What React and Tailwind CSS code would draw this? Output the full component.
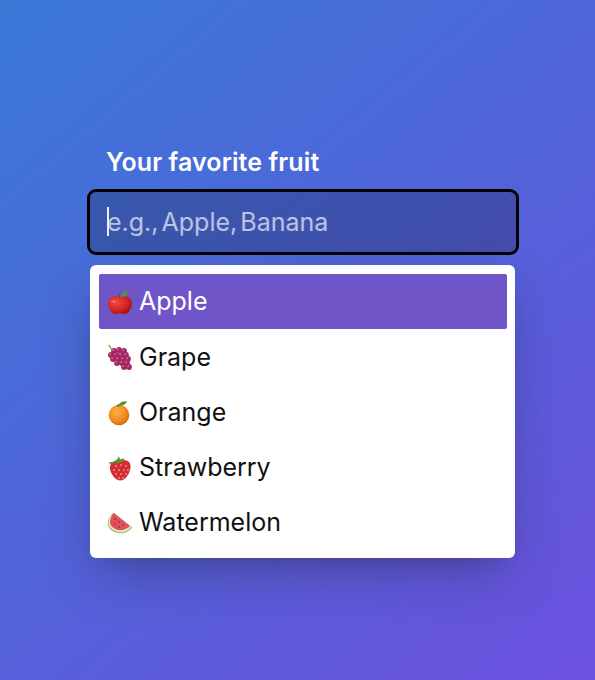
const Apple = () => (
    <svg viewBox="0 0 26 26" className="w-[26px] h-[26px]">
        <defs>
            <radialGradient id="appleFill" cx="35%" cy="35%" r="75%">
                <stop offset="0%" stopColor="#f0483e" />
                <stop offset="65%" stopColor="#d3201f" />
                <stop offset="100%" stopColor="#96100f" />
            </radialGradient>
        </defs>
        <path d="M13 8.5C10 6.2 3 6.3 1.4 12.6 0.4 17.5 3.6 24.6 8 25c2 .2 3.4-.8 5-.8s3 1 5 .8c4.400-.4 7.600-7.500 6.600-12.400C23 6.300 16 6.200 13 8.500Z" fill="url(#appleFill)" />
        <path d="M13.300 8.200C14 4.600 16.500 2 20.500 1.200c.3 3.600-2.500 6.400-7.200 7Z" fill="#4f9a2e" />
        <path d="M12.800 9 12.300 5.200" stroke="#6b4a2a" strokeWidth="1" strokeLinecap="round" />
        <ellipse cx="6.500" cy="12.500" rx="2.300" ry="1.400" fill="#ff8d80" opacity="0.55" />
    </svg>
)

const Grape = () => {
    const dots = [
        [7, 6], [12, 5], [17, 6], [4, 10], [9, 10], [14, 10], [19, 10],
        [6, 14], [11, 14], [16, 14], [21, 14], [10, 18], [15, 18], [20, 18], [17, 22], [22, 22],
    ]

    return (
        <svg viewBox="0 0 26 26" className="w-[26px] h-[26px]">
            {dots.map(([cx, cy], index) => (
                <g key={index}>
                    <circle cx={cx} cy={cy} r="2.900" fill="#a32463" />
                    <circle cx={cx - 0.8} cy={cy - 0.8} r="1.100" fill="#cf5c8c" />
                </g>
            ))}
            <path d="M5 5 2 .5" stroke="#7d9a34" strokeWidth="1.300" strokeLinecap="round" />
        </svg>
    )
}

const Orange = () => (
    <svg viewBox="0 0 26 26" className="w-[26px] h-[26px]">
        <defs>
            <radialGradient id="orangeFill" cx="40%" cy="35%" r="75%">
                <stop offset="0%" stopColor="#fbb04a" />
                <stop offset="60%" stopColor="#f18a1d" />
                <stop offset="100%" stopColor="#c85f0c" />
            </radialGradient>
        </defs>
        <circle cx="12" cy="15" r="10.300" fill="url(#orangeFill)" />
        <path d="M11 5.500C13 2.200 16.500 .8 20 1.500c-1.200 3-5 5-9 4Z" fill="#5d8f2c" />
        <circle cx="11" cy="5.600" r="1.100" fill="#6b5a20" />
    </svg>
)

const Strawberry = () => {
    const seeds = [
        [9, 11], [14, 10], [19, 11], [7, 15], [12, 15], [17, 15], [21, 15],
        [9, 19], [14, 19], [19, 19], [12, 23], [16, 23],
    ]

    return (
        <svg viewBox="0 0 26 26" className="w-[26px] h-[26px]">
            <path d="M13 6C19 4 24 6 23.500 12.500 23 19 18 25.500 13.500 25.500 8.500 25.500 3.500 19 3 13.500 2.700 8 7 5 13 6Z" fill="#d52b33" />
            <path d="M1.500 7.500 7 6.500 10.500 4 11.500 1.500 13.500 4.500 17.500 3 16 6.500 12 8 8 7.500 4 9.500Z" fill="#4e9a2e" />
            {seeds.map(([cx, cy], index) => (
                <ellipse key={index} cx={cx} cy={cy} rx="0.700" ry="1" fill="#f5b8a0" />
            ))}
        </svg>
    )
}

const Watermelon = () => (
    <svg viewBox="0 0 26 26" className="w-[26px] h-[26px]">
        <path d="M7 3C5 3 1 7 .6 13c-.3 5 5 10 12 10.500 5 .3 10-1.800 12.800-6.200Z" fill="#a9cf7c" />
        <path d="M7 3C5.200 3.300 2 7.500 1.800 12.800c-.2 4 4.800 8.600 11 9 4.500.2 9-1.800 11.200-5Z" fill="#f4ecd0" />
        <path d="M7 3C5.500 3.500 3 8 3 12.500c0 3.500 4.500 7.500 10 7.700 3.800.1 7.800-1.400 10-4.200Z" fill="#e4505a" />
        <circle cx="8" cy="9" r="0.700" fill="#5a1c1c" />
        <circle cx="12" cy="12" r="0.700" fill="#5a1c1c" />
        <circle cx="8" cy="14" r="0.700" fill="#5a1c1c" />
        <circle cx="16" cy="15" r="0.700" fill="#5a1c1c" />
        <circle cx="12" cy="17" r="0.700" fill="#5a1c1c" />
    </svg>
)

const fruits = [
    { name: "Apple", Icon: Apple },
    { name: "Grape", Icon: Grape },
    { name: "Orange", Icon: Orange },
    { name: "Strawberry", Icon: Strawberry },
    { name: "Watermelon", Icon: Watermelon },
]

const App = () => {
    return (
        <div className="w-[595px] h-[680px] overflow-hidden bg-[linear-gradient(140deg,#3a79d8_0%,#5263d9_50%,#6c50de_100%)] font-['Inter',sans-serif] pt-[148px] pl-[90px]">
            <div className="w-[426px] flex flex-col">
                <label className="pl-[16px] h-[29px] text-[25px] leading-[29px] font-semibold tracking-[0.1px] text-white">Your favorite fruit</label>
                <div className="relative mt-[15px]">
                    <input
                        className="block w-full h-[60px] pl-[17px] rounded-[6px] bg-black/20 text-[25px] [word-spacing:-4px] text-white placeholder:text-white/65 outline-[3px] outline-black"
                        placeholder="e.g., Apple, Banana"
                    />
                    <span className="absolute left-[17px] top-[15px] w-[2px] h-[29px] bg-white/90"></span>
                </div>
                <ul className="mt-[13px] w-[425px] pl-[9px] pr-[8px] py-[9px] bg-white rounded-[6px] shadow-[0_20px_50px_-10px_rgba(22,23,24,0.35),0_10px_20px_-15px_rgba(22,23,24,0.2)]">
                    {fruits.map(({ name, Icon }, index) => (
                        <li
                            key={name}
                            className={`flex items-center gap-[6px] h-[55px] pl-[8px] rounded-[2px] text-[25px] ${index === 0 ? "pt-[1px] bg-[#6f55c8] text-white" : "pt-[2px] text-[#111111]"}`}
                        >
                            <Icon />
                            {name}
                        </li>
                    ))}
                </ul>
            </div>
        </div>
    )
}

export default App
